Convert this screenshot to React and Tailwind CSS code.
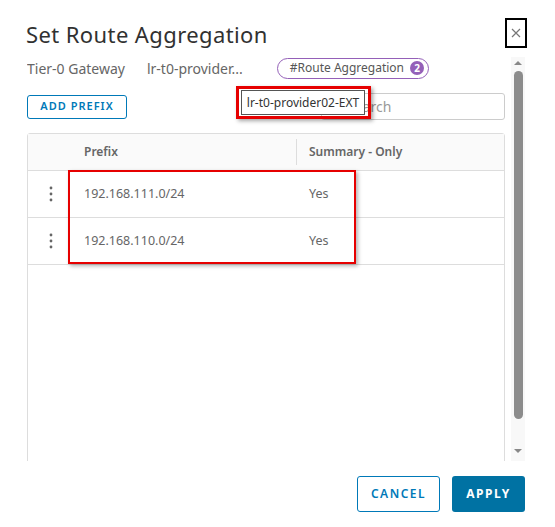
import React from 'react';

const rows = [
  { prefix: '192.168.111.0/24', summary: 'Yes' },
  { prefix: '192.168.110.0/24', summary: 'Yes' },
];

function Dots() {
  return (
    <svg width="4" height="16" viewBox="0 0 4 16" className="text-[#666]">
      <circle cx="2" cy="2" r="1.4" fill="currentColor" />
      <circle cx="2" cy="8" r="1.4" fill="currentColor" />
      <circle cx="2" cy="14" r="1.4" fill="currentColor" />
    </svg>
  );
}

export default function App() {
  return (
    <div
      className="relative w-[555px] h-[527px] bg-white text-[#565656] overflow-hidden"
      style={{ fontFamily: '"Noto Sans", "Open Sans", sans-serif' }}
    >
      {/* Header */}
      <div className="flex items-start justify-between pl-[26px] pr-[28px] pt-[18px] h-[57px]">
        <h1 className="text-[22px] leading-[30px] tracking-[0.4px] text-[#313131] font-normal mt-[1px]">Set Route Aggregation</h1>
        <button className="w-[22px] h-[30px] border-2 border-black flex items-center justify-center">
          <svg width="10" height="10" viewBox="0 0 10 10">
            <path d="M1 1 L9 9 M9 1 L1 9" stroke="#777" strokeWidth="1.2" />
          </svg>
        </button>
      </div>

      {/* Body */}
      <div className="flex h-[404px] pl-[27px]">
        <div className="w-[478px] overflow-hidden">
          <div className="flex items-center h-[22px] text-[14px]">
            <span className="text-[#666]">Tier-0 Gateway</span>
            <span className="ml-[22px] text-[#666]">lr-t0-provider...</span>
            <span className="ml-[34px] flex items-center h-[21px] pl-[12px] pr-[4px] rounded-full border border-[#9460b8] text-[12px] text-[#565656]">
              #Route Aggregation
              <span className="ml-[6px] w-[14px] h-[14px] rounded-full bg-[#9460b8] text-white text-[10px] font-bold flex items-center justify-center">2</span>
            </span>
          </div>

          <div className="flex items-center justify-between mt-[14px] h-[27px]">
            <button className="h-[24px] w-[100px] border border-[#0079b8] rounded-[3px] text-[#0079b8] text-[11px] font-semibold tracking-[1px]">
              ADD PREFIX
            </button>
            <div className="w-[184px] h-[27px] border border-[#ccc] rounded-[3px] flex items-center pl-[25px] text-[14px] text-[#999]">
              Search
            </div>
          </div>

          <div className="mt-[13px] border border-[#ddd] rounded-t-[3px] h-[340px]">
            <div className="flex items-center h-[37px] bg-[#fafafa] border-b border-[#ddd] text-[12px] font-semibold text-[#666]">
              <div className="w-[56px]" />
              <div className="w-[212px]">Prefix</div>
              <div className="w-[1px] h-[26px] bg-[#ddd]" />
              <div className="pl-[12px]">Summary - Only</div>
            </div>
            {rows.map((r) => (
              <div key={r.prefix} className="flex items-center h-[47px] border-b border-[#ddd] text-[12.5px] text-[#666]">
                <div className="w-[56px] flex pl-[21px]">
                  <Dots />
                </div>
                <div className="w-[225px]">{r.prefix}</div>
                <div>{r.summary}</div>
              </div>
            ))}
          </div>
        </div>

        {/* Scrollbar */}
        <div className="ml-[6px] w-[14px] flex flex-col items-center bg-[#f8f8f8]">
          <svg width="10" height="8" viewBox="0 0 10 8" className="mt-[2px]">
            <path d="M1 6 L5 2 L9 6 Z" fill="#888" />
          </svg>
          <div className="mt-[4px] w-[9px] h-[348px] rounded-full bg-[#8c8c8c]" />
          <div className="flex-1" />
          <svg width="10" height="8" viewBox="0 0 10 8" className="mb-[6px]">
            <path d="M1 2 L5 6 L9 2 Z" fill="#888" />
          </svg>
        </div>
      </div>

      {/* Footer */}
      <div className="flex justify-end gap-[12px] pr-[30px] mt-[15px]">
        <button className="h-[36px] w-[83px] border border-[#0079b8] rounded-[3px] text-[#0079b8] text-[12px] font-semibold tracking-[1.5px]">
          CANCEL
        </button>
        <button className="h-[36px] w-[73px] bg-[#0072a3] rounded-[3px] text-white text-[12px] font-bold tracking-[1.5px]">
          APPLY
        </button>
      </div>

      {/* Tooltip with red highlight */}
      <div className="absolute left-[236px] top-[86px] w-[135px] h-[33px] border-[3px] border-[#e60000] shadow-[2px_2px_4px_rgba(0,0,0,0.35)]" />
      <div className="absolute left-[241px] top-[90px] w-[124px] h-[25px] bg-white border border-[#555] flex items-center justify-center text-[12px] text-[#333]">
        lr-t0-provider02-EXT
      </div>

      {/* Red highlight on rows */}
      <div className="absolute left-[68px] top-[170px] w-[288px] h-[94px] border-2 border-[#e60000] shadow-[2px_2px_4px_rgba(0,0,0,0.3)]" />
    </div>
  );
}
